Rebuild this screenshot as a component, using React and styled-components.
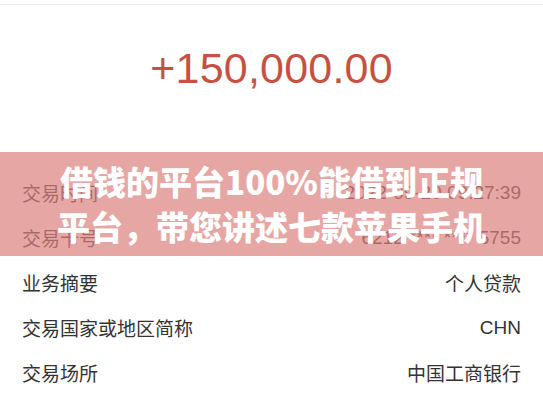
import styled, { createGlobalStyle } from "styled-components";

const GlobalStyle = createGlobalStyle`
  html, body {
    margin: 0;
    padding: 0;
    background: #ffffff;
  }
  body {
    font-family: "Liberation Sans", "Noto Sans CJK SC", sans-serif;
  }
`;

const rows = [
  { label: "交易时间", value: "2022-09-20 09:27:39" },
  { label: "交易卡号", value: "6212 **** **** 5755" },
  { label: "业务摘要", value: "个人贷款" },
  { label: "交易国家或地区简称", value: "CHN" },
  { label: "交易场所", value: "中国工商银行" },
  { label: "交易金额", value: "150,000.00" },
];

export default function App() {
  return (
    <>
      <GlobalStyle />
      <Page>
        <TopBar />
        <AmountBlock>
          <Amount>+150,000.00</Amount>
        </AmountBlock>
        <DetailList>
          {rows.map((r) => (
            <Row key={r.label}>
              <Label>{r.label}</Label>
              <Value>{r.value}</Value>
            </Row>
          ))}
        </DetailList>
        <Banner>
          <BannerLine>借钱的平台100%能借到正规</BannerLine>
          <BannerLine>平台，带您讲述七款苹果手机</BannerLine>
        </Banner>
      </Page>
    </>
  );
}

const Page = styled.div`
  position: relative;
  width: 543px;
  height: 408px;
  overflow: hidden;
  background: #ffffff;
`;

const TopBar = styled.div`
  height: 4px;
  border-bottom: 1px solid #ebebeb;
`;

const AmountBlock = styled.div`
  display: flex;
  justify-content: center;
  height: 124px;
  padding-top: 41px;
`;

const Amount = styled.div`
  font-family: "Liberation Sans", sans-serif;
  font-size: 43px;
  line-height: 44px;
  color: #c65142;
  letter-spacing: 0.2px;
`;

const DetailList = styled.div`
  display: flex;
  flex-direction: column;
`;

const Row = styled.div`
  display: flex;
  justify-content: space-between;
  align-items: center;
  height: 45px;
  padding: 0 22px;
`;

const Label = styled.span`
  font-size: 19px;
  color: #333333;
`;

const Value = styled.span`
  font-size: 19px;
  color: #333333;
`;

const Banner = styled.div`
  position: absolute;
  left: 0;
  right: 0;
  top: 152px;
  height: 104px;
  display: flex;
  flex-direction: column;
  justify-content: center;
  align-items: center;
  background: rgba(220, 130, 125, 0.7);
`;

const BannerLine = styled.div`
  font-family: "Noto Sans CJK SC", sans-serif;
  font-weight: 900;
  font-size: 33px;
  line-height: 45px;
  color: #ffffff;
  white-space: nowrap;
`;
